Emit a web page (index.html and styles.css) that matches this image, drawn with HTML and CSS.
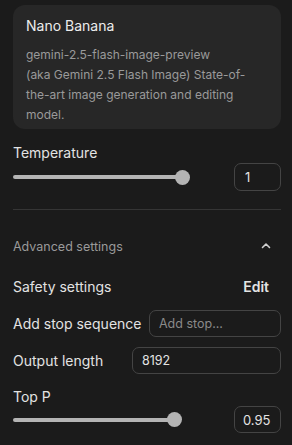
FILE: index.html
```html
<html>
<head>
    <title>Run settings</title>
    <meta charset="UTF-8">
    <link rel="stylesheet" href="styles.css">
</head>
<body>
    <div class="settings-panel">
        <div class="model-card">
            <div class="model-name">Nano Banana</div>
            <div class="model-desc">
                gemini-2.5-flash-image-preview<br>
                (aka Gemini 2.5 Flash Image) State-of-the-art image generation and editing model.
            </div>
        </div>

        <!-- Temperature -->
        <div class="setting-label temp-label">Temperature</div>
        <div class="slider-row">
            <div class="slider">
                <div class="slider-track" style="width: 170px"></div>
                <div class="slider-thumb"></div>
            </div>
            <input class="num-input" type="text" value="1">
        </div>

        <div class="divider"></div>

        <div class="advanced-header">
            <span>Advanced settings</span>
            <svg class="chevron" width="12" height="12" viewBox="0 0 12 12" fill="none" stroke="currentColor" stroke-width="1.6" stroke-linecap="round" stroke-linejoin="round">
                <polyline points="2.5 7.5 6 4 9.5 7.5"/>
            </svg>
        </div>

        <div class="row safety-row">
            <span class="row-label">Safety settings</span>
            <span class="edit-link">Edit</span>
        </div>

        <div class="row stop-row">
            <span class="row-label">Add stop sequence</span>
            <input class="text-input stop-input" type="text" placeholder="Add stop...">
        </div>

        <div class="row output-row">
            <span class="row-label">Output length</span>
            <input class="text-input output-input" type="text" value="8192">
        </div>

        <!-- Top P -->
        <div class="setting-label topp-label">Top P</div>
        <div class="slider-row topp-row">
            <div class="slider">
                <div class="slider-track" style="width: 162px"></div>
                <div class="slider-thumb"></div>
            </div>
            <input class="num-input" type="text" value="0.95">
        </div>
    </div>
</body>
</html>
```

FILE: styles.css
```css
:root {
    --background: #1b1b1b;
    --card: #272727;
    --text-primary: #e3e3e3;
    --text-secondary: #9a9a9a;
    --border: #444444;
    --track: #b4b4b4;
}

body {
    font-family: 'Inter', 'Noto Sans', sans-serif;
    background: var(--background);
    color: var(--text-primary);
    margin: 0;
    padding: 5px 11px 0 13px;
    overflow: hidden;
}

.model-card {
    background: var(--card);
    border-radius: 12px;
    padding: 11px 13px 4px;
}

.model-name {
    font-size: 14px;
    line-height: 20px;
    font-weight: 400;
    color: #ececec;
    margin-bottom: 9px;
}

.model-desc {
    font-size: 12px;
    line-height: 20px;
    color: var(--text-secondary);
}

.setting-label {
    font-size: 14px;
    font-weight: 400;
    line-height: 20px;
}

.temp-label {
    margin-top: 14px;
}

.slider-row {
    display: flex;
    align-items: center;
    justify-content: space-between;
    height: 28px;
}

.slider {
    display: flex;
    align-items: center;
}

.slider-track {
    height: 4px;
    background: var(--track);
    border-radius: 2px;
}

.slider-thumb {
    width: 15px;
    height: 15px;
    border-radius: 50%;
    background: var(--track);
    margin-left: -8px;
}

.num-input {
    width: 47px;
    height: 28px;
    box-sizing: border-box;
    background: transparent;
    border: 1px solid var(--border);
    border-radius: 7px;
    color: var(--text-primary);
    font-family: inherit;
    font-size: 13px;
    padding: 0 6px 0 10px;
    outline: none;
}

.divider {
    height: 1px;
    background: #353535;
    margin-top: 18px;
}

.advanced-header {
    display: flex;
    justify-content: space-between;
    align-items: center;
    height: 20px;
    margin-top: 26px;
    font-size: 12.5px;
    color: var(--text-secondary);
}

.chevron {
    color: #d0d0d0;
    margin-right: 9px;
}

.row {
    display: flex;
    align-items: center;
    justify-content: space-between;
}

.row-label {
    font-size: 14px;
    white-space: nowrap;
}

.safety-row {
    height: 20px;
    margin-top: 20px;
}

.edit-link {
    font-size: 14px;
    font-weight: 600;
    margin-right: 12px;
}

.stop-row {
    margin-top: 14px;
}

.text-input {
    height: 27px;
    box-sizing: border-box;
    background: transparent;
    border: 1px solid var(--border);
    border-radius: 7px;
    color: var(--text-primary);
    font-family: inherit;
    font-size: 12.5px;
    padding: 0 9px;
    outline: none;
}

.text-input::placeholder {
    color: #8a8a8a;
}

.stop-input {
    width: 132px;
}

.output-row {
    margin-top: 10px;
}

.output-input {
    width: 149px;
}

.topp-label {
    margin-top: 14px;
    line-height: 18px;
}

.topp-row {
    height: 27px;
}

.topp-row .num-input {
    height: 27px;
    padding: 0 4px 0 8px;
}
```
